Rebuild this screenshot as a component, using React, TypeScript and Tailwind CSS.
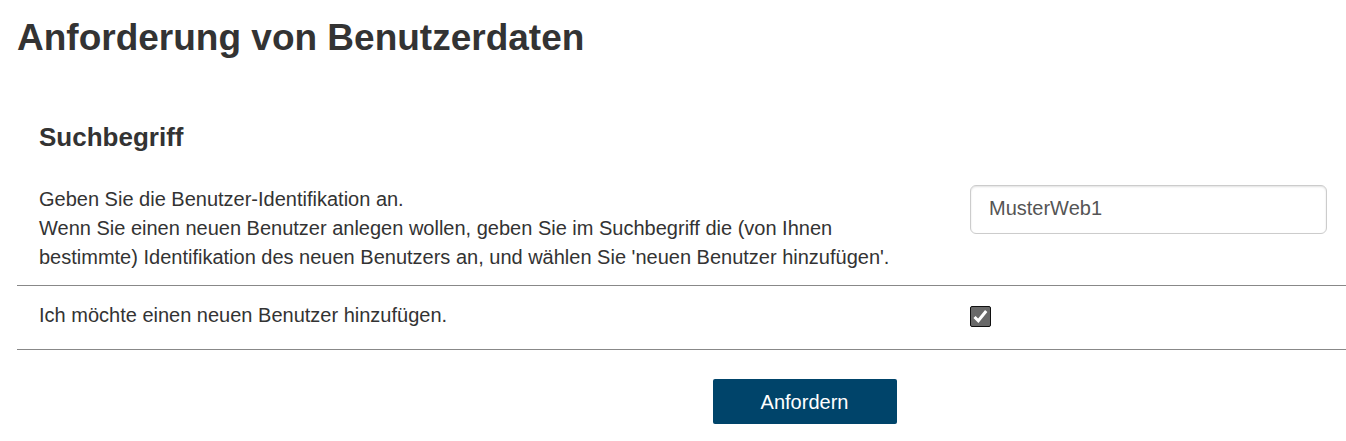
export default function App() {
  return (
    <main className="pl-[17px] pt-4 font-['Liberation_Sans',Arial,sans-serif] text-xl text-[#333333]">
      <h1 className="text-[37px] leading-11 font-bold">Anforderung von Benutzerdaten</h1>
      <form className="mt-14" onSubmit={(e) => e.preventDefault()}>
        <h2 className="px-[22px] pt-px text-[26px] leading-10 font-bold">Suchbegriff</h2>
        <div className="flex border-b border-[#888888] pt-7 pb-[13px] pl-[22px]">
          <label htmlFor="suche" className="flex-1 pr-12 leading-[29px]">
            Geben Sie die Benutzer-Identifikation an.
            <br />
            Wenn Sie einen neuen Benutzer anlegen wollen, geben Sie im Suchbegriff die (von Ihnen
            bestimmte) Identifikation des neuen Benutzers an, und wählen Sie 'neuen Benutzer hinzufügen'.
          </label>
          <div className="w-[376px] pr-[19px]">
            <input
              id="suche"
              type="text"
              defaultValue="MusterWeb1"
              className="h-[49px] w-full rounded-md border border-[#cccccc] px-[18px] pb-0.5 text-[#555555] shadow-[inset_0_1px_2px_rgba(0,0,0,0.12)]"
            />
          </div>
        </div>
        <div className="flex border-b border-[#888888] pt-[15px] pb-5 pl-[22px]">
          <label htmlFor="neu" className="flex-1 leading-7">
            Ich möchte einen neuen Benutzer hinzufügen.
          </label>
          <div className="grid w-[376px] items-end justify-start pb-0.5">
            <input
              id="neu"
              type="checkbox"
              defaultChecked
              className="peer col-start-1 row-start-1 size-[21px] appearance-none rounded-xs border border-[#101010] bg-white checked:bg-[#696969]"
            />
            <svg
              viewBox="0 0 21 21"
              className="pointer-events-none invisible col-start-1 row-start-1 size-[21px] peer-checked:visible"
              fill="none"
              stroke="white"
              strokeWidth="3"
              aria-hidden="true"
            >
              <path d="M4.5 11 8.3 14.8 16.2 5" />
            </svg>
          </div>
        </div>
        <div className="flex justify-center pt-[29px] pl-[246px]">
          <button type="submit" className="h-[45px] w-[184px] rounded-xs bg-[#00446a] text-white">
            Anfordern
          </button>
        </div>
      </form>
    </main>
  );
}
